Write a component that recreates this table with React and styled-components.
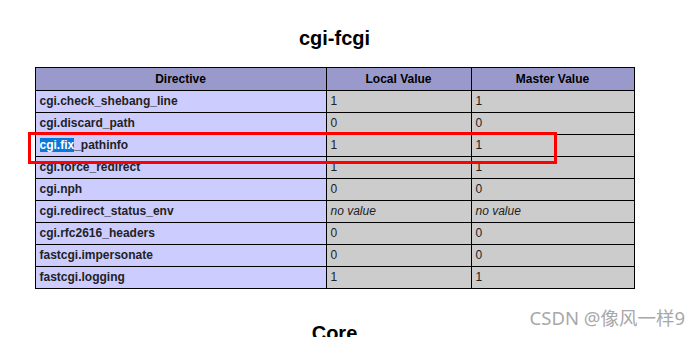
import React from "react";
import styled, { createGlobalStyle } from "styled-components";

const Global = createGlobalStyle`
  html, body {
    margin: 0;
    padding: 0;
    background: #fff;
    overflow: hidden;
  }
  body {
    font-family: "Liberation Sans", Arial, sans-serif;
    color: #222;
  }
`;

const Page = styled.div`
  position: relative;
  width: 700px;
  height: 337px;
  overflow: hidden;
`;

const Center = styled.div`
  width: 669px;
  display: flex;
  flex-direction: column;
  align-items: center;
`;

const Heading = styled.h2`
  margin: ${(p) => p.$top}px 0 0;
  font-size: 20px;
  line-height: 24px;
  font-weight: 700;
  color: #000;
`;

const TableWrap = styled.div`
  position: relative;
  margin-top: 17px;
`;

const Table = styled.table`
  width: 600px;
  border-collapse: collapse;
  font-size: 12px;
  table-layout: fixed;
`;

const Th = styled.th`
  background: #9999cc;
  border: 1px solid #000;
  height: 22px;
  padding: 0 4px;
  line-height: 22px;
  font-weight: 700;
  text-align: center;
  color: #000;
`;

const Td = styled.td`
  border: 1px solid #000;
  height: 21px;
  padding: 0 4px;
  line-height: 21px;
  background: ${(p) => (p.$name ? "#ccccff" : "#cccccc")};
  font-weight: ${(p) => (p.$name ? 700 : 400)};
  font-style: ${(p) => (p.$empty ? "italic" : "normal")};
  color: #222;
  white-space: nowrap;
  overflow: hidden;
`;

const Selected = styled.span`
  background: #0a78d7;
  color: #fff;
`;

const Marker = styled.div`
  position: absolute;
  left: -7px;
  top: 65px;
  width: 529px;
  height: 32px;
  box-sizing: border-box;
  border: 3px solid #ff0000;
  pointer-events: none;
`;

const Watermark = styled.div`
  position: absolute;
  right: 15px;
  top: 305px;
  font-family: "Noto Sans", "Noto Sans CJK SC", sans-serif;
  font-size: 18.5px;
  line-height: 26px;
  color: #a8a8a8;
  white-space: nowrap;
`;

const rows = [
  ["cgi.check_shebang_line", "1", "1"],
  ["cgi.discard_path", "0", "0"],
  ["cgi.fix_pathinfo", "1", "1"],
  ["cgi.force_redirect", "1", "1"],
  ["cgi.nph", "0", "0"],
  ["cgi.redirect_status_env", null, null],
  ["cgi.rfc2616_headers", "0", "0"],
  ["fastcgi.impersonate", "0", "0"],
  ["fastcgi.logging", "1", "1"],
];

function Value({ v }) {
  return v === null ? <Td $empty>no value</Td> : <Td>{v}</Td>;
}

export default function App() {
  return (
    <Page>
      <Global />
      <Center>
        <Heading $top={26}>cgi-fcgi</Heading>
        <TableWrap>
          <Table>
            <colgroup>
              <col style={{ width: 291 }} />
              <col style={{ width: 145 }} />
              <col style={{ width: 163 }} />
            </colgroup>
            <thead>
              <tr>
                <Th>Directive</Th>
                <Th>Local Value</Th>
                <Th>Master Value</Th>
              </tr>
            </thead>
            <tbody>
              {rows.map(([name, local, master]) => (
                <tr key={name}>
                  <Td $name>
                    {name === "cgi.fix_pathinfo" ? (
                      <>
                        <Selected>cgi.fix</Selected>_pathinfo
                      </>
                    ) : (
                      name
                    )}
                  </Td>
                  <Value v={local} />
                  <Value v={master} />
                </tr>
              ))}
            </tbody>
          </Table>
          <Marker />
        </TableWrap>
        <Heading $top={32}>Core</Heading>
      </Center>
      <Watermark>CSDN @像风一样9</Watermark>
    </Page>
  );
}
